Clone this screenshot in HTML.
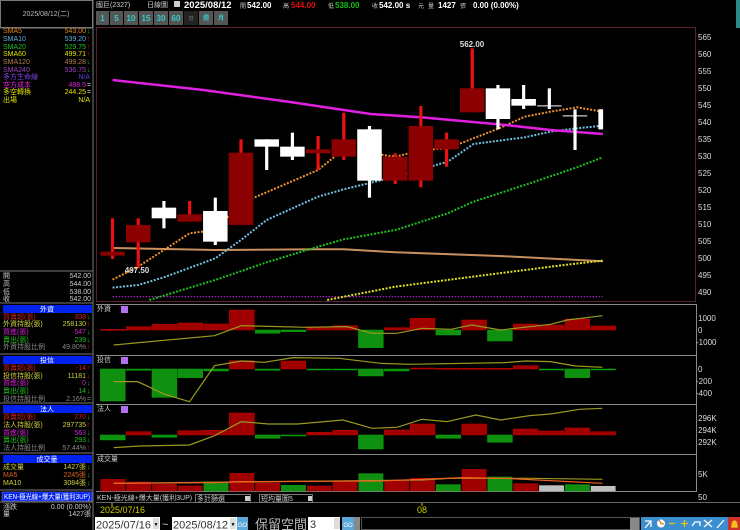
<!DOCTYPE html>
<html><head><meta charset="utf-8">
<style>
html,body{margin:0;padding:0;background:#000;width:740px;height:530px;overflow:hidden}
svg{display:block}
text{font-family:"Liberation Sans","Noto Sans CJK TC",sans-serif}
.s{font-size:7px}
.ax{font-size:8px;fill:#ddd}
</style></head><body>
<svg id="sv" width="740" height="530" viewBox="0 0 740 530" xmlns="http://www.w3.org/2000/svg">
<rect x="0.5" y="0.5" width="92" height="27" fill="#000" stroke="#777"/>
<text x="46" y="16" text-anchor="middle" class="s" fill="#bbb">2025/08/12(二)</text>
<line x1="93" y1="0" x2="93" y2="530" stroke="#777"/>
<line x1="0" y1="28" x2="93" y2="28" stroke="#777"/>
<g class="s">
<text x="3" y="33" fill="#e08020">SMA5</text><text x="86" y="33" text-anchor="end" fill="#e08020">543.00</text><text x="87" y="33" fill="#0c0">↓</text>
<text x="3" y="41" fill="#60b0e0">SMA10</text><text x="86" y="41" text-anchor="end" fill="#60b0e0">539.20</text><text x="87" y="41" fill="#e00">↑</text>
<text x="3" y="49" fill="#20c020">SMA20</text><text x="86" y="49" text-anchor="end" fill="#20c020">529.75</text><text x="87" y="49" fill="#e00">↑</text>
<text x="3" y="56" fill="#e0e000">SMA60</text><text x="86" y="56" text-anchor="end" fill="#e0e000">499.71</text><text x="87" y="56" fill="#e00">↑</text>
<text x="3" y="64" fill="#b08050">SMA120</text><text x="86" y="64" text-anchor="end" fill="#b08050">499.28</text><text x="87" y="64" fill="#0c0">↓</text>
<text x="3" y="72" fill="#a040c0">SMA240</text><text x="86" y="72" text-anchor="end" fill="#a040c0">536.75</text><text x="87" y="72" fill="#0c0">↓</text>
<text x="3" y="79" fill="#8040e0">多方生命線</text><text x="90" y="79" text-anchor="end" fill="#6040e0">N/A</text>
<text x="3" y="87" fill="#e020e0">空方成本</text><text x="86" y="87" text-anchor="end" fill="#e020e0">488.5</text><text x="87" y="87" fill="#ccc">=</text>
<text x="3" y="94" fill="#e0e000">多空轉換</text><text x="86" y="94" text-anchor="end" fill="#e0e000">244.25</text><text x="87" y="94" fill="#ccc">=</text>
<text x="3" y="102" fill="#e0e000">出場</text><text x="90" y="102" text-anchor="end" fill="#e0e000">N/A</text>
</g>
<line x1="0" y1="271" x2="93" y2="271" stroke="#777"/>
<g class="s" fill="#ccc">
<text x="3" y="278">開</text><text x="91" y="278" text-anchor="end">542.00</text>
<text x="3" y="286">高</text><text x="91" y="286" text-anchor="end">544.00</text>
<text x="3" y="294">低</text><text x="91" y="294" text-anchor="end">538.00</text>
<text x="3" y="301">收</text><text x="91" y="301" text-anchor="end">542.00</text>
</g>
<line x1="0" y1="303" x2="93" y2="303" stroke="#777"/>
<rect x="3" y="305" width="89" height="8" fill="#0022ee"/><text x="47" y="311.5" text-anchor="middle" class="s" fill="#fff">外資</text>
<g class="s">
<text x="3" y="319" fill="#d02020">買賣超(張)</text><text x="86" y="319" text-anchor="end" fill="#d02020">308</text><text x="87" y="319" fill="#0c0">↓</text>
<text x="3" y="326" fill="#d0d040">外資持股(張)</text><text x="86" y="326" text-anchor="end" fill="#d0d040">258130</text><text x="87" y="326" fill="#e00">↑</text>
<text x="3" y="334" fill="#d020d0">買進(張)</text><text x="86" y="334" text-anchor="end" fill="#d020d0">547</text><text x="87" y="334" fill="#0c0">↓</text>
<text x="3" y="342" fill="#20c020">賣出(張)</text><text x="86" y="342" text-anchor="end" fill="#20c020">239</text><text x="87" y="342" fill="#0c0">↓</text>
<text x="3" y="349" fill="#888">外資持股比例</text><text x="86" y="349" text-anchor="end" fill="#888">49.80%</text><text x="87" y="349" fill="#e00">↑</text>
</g>
<line x1="0" y1="354" x2="93" y2="354" stroke="#777"/>
<rect x="3" y="356" width="89" height="8" fill="#0022ee"/><text x="47" y="362.5" text-anchor="middle" class="s" fill="#fff">投信</text>
<g class="s">
<text x="3" y="370" fill="#d02020">買賣超(張)</text><text x="86" y="370" text-anchor="end" fill="#d02020">-14</text><text x="87" y="370" fill="#e00">↑</text>
<text x="3" y="378" fill="#d0d040">投信持股(張)</text><text x="86" y="378" text-anchor="end" fill="#d0d040">11181</text><text x="87" y="378" fill="#e00">↓</text>
<text x="3" y="385" fill="#d020d0">買進(張)</text><text x="86" y="385" text-anchor="end" fill="#d020d0">0</text><text x="87" y="385" fill="#0c0">↓</text>
<text x="3" y="393" fill="#20c020">賣出(張)</text><text x="86" y="393" text-anchor="end" fill="#20c020">14</text><text x="87" y="393" fill="#0c0">↓</text>
<text x="3" y="401" fill="#888">投信持股比例</text><text x="86" y="401" text-anchor="end" fill="#888">2.16%</text><text x="87" y="401" fill="#888">=</text>
</g>
<line x1="0" y1="403" x2="93" y2="403" stroke="#777"/>
<rect x="3" y="405" width="89" height="8" fill="#0022ee"/><text x="47" y="411.5" text-anchor="middle" class="s" fill="#fff">法人</text>
<g class="s">
<text x="3" y="419" fill="#d02020">買賣超(張)</text><text x="86" y="419" text-anchor="end" fill="#d02020">270</text><text x="87" y="419" fill="#0c0">↓</text>
<text x="3" y="427" fill="#d0d040">法人持股(張)</text><text x="86" y="427" text-anchor="end" fill="#d0d040">297735</text><text x="87" y="427" fill="#e00">↑</text>
<text x="3" y="435" fill="#d020d0">買進(張)</text><text x="86" y="435" text-anchor="end" fill="#d020d0">563</text><text x="87" y="435" fill="#0c0">↓</text>
<text x="3" y="442" fill="#20c020">賣出(張)</text><text x="86" y="442" text-anchor="end" fill="#20c020">293</text><text x="87" y="442" fill="#0c0">↓</text>
<text x="3" y="450" fill="#888">法人持股比例</text><text x="86" y="450" text-anchor="end" fill="#888">57.44%</text><text x="87" y="450" fill="#e00">↑</text>
</g>
<line x1="0" y1="453" x2="93" y2="453" stroke="#777"/>
<rect x="3" y="455" width="89" height="8" fill="#0022ee"/><text x="47" y="461.5" text-anchor="middle" class="s" fill="#fff">成交量</text>
<g class="s">
<text x="3" y="469" fill="#d0d040">成交量</text><text x="86" y="469" text-anchor="end" fill="#d0d040">1427張</text><text x="87" y="469" fill="#0c0">↓</text>
<text x="3" y="477" fill="#e06020">MA5</text><text x="86" y="477" text-anchor="end" fill="#e06020">2245張</text><text x="87" y="477" fill="#0c0">↓</text>
<text x="3" y="485" fill="#d0d040">MA10</text><text x="86" y="485" text-anchor="end" fill="#d0d040">3084張</text><text x="87" y="485" fill="#0c0">↓</text>
</g>
<line x1="0" y1="490" x2="93" y2="490" stroke="#777"/>
<rect x="2" y="492" width="90" height="9" fill="#0022ee" stroke="#88f" stroke-width="0.5"/>
<text x="4" y="499" class="s" fill="#fff" textLength="86" lengthAdjust="spacingAndGlyphs">KEN-極光線+爆大量(獲利3UP)</text>
<line x1="0" y1="502" x2="93" y2="502" stroke="#777"/>
<g class="s" fill="#ccc">
<text x="3" y="509">漲跌</text><text x="91" y="509" text-anchor="end">0.00 (0.00%)</text>
<text x="3" y="516">量</text><text x="91" y="516" text-anchor="end">1427張</text>
</g>

<g font-size="7" fill="#ccc">
<text x="96" y="7">國巨(2327)</text>
<text x="147" y="7">日線圖</text>
<rect x="174" y="1" width="6" height="6" fill="#ccc"/>
</g>
<text x="184" y="8" font-size="9.5" font-weight="bold" fill="#fff">2025/08/12</text>
<text x="240" y="8" font-size="6" fill="#ccc">開</text>
<text x="247" y="8" font-size="8" font-weight="bold" fill="#fff">542.00</text>
<text x="283" y="8" font-size="6" fill="#ccc">高</text>
<text x="291" y="8" font-size="8" font-weight="bold" fill="#e01010">544.00</text>
<text x="328" y="8" font-size="6" fill="#ccc">低</text>
<text x="335" y="8" font-size="8" font-weight="bold" fill="#10c010">538.00</text>
<text x="372" y="8" font-size="6" fill="#ccc">收</text>
<text x="379" y="8" font-size="8" font-weight="bold" fill="#fff">542.00 s</text>
<text x="418" y="8" font-size="6" fill="#ccc">元</text>
<text x="428" y="8" font-size="6" fill="#ccc">量</text>
<text x="438" y="8" font-size="8" font-weight="bold" fill="#fff">1427</text>
<text x="460" y="8" font-size="6" fill="#ccc">張</text>
<text x="473" y="8" font-size="8" font-weight="bold" fill="#fff">0.00 (0.00%)</text>
<rect x="736" y="0" width="4" height="28" fill="#2a8a8a"/>

<g font-size="8" font-weight="bold" fill="#3cc">
<rect x="96" y="11" width="13" height="14" fill="#555"/><text x="102.5" y="21" text-anchor="middle">1</text>
<rect x="110" y="11" width="13" height="14" fill="#555"/><text x="116.5" y="21" text-anchor="middle">5</text>
<rect x="124" y="11" width="14" height="14" fill="#555"/><text x="131" y="21" text-anchor="middle">10</text>
<rect x="139" y="11" width="14" height="14" fill="#555"/><text x="146" y="21" text-anchor="middle">15</text>
<rect x="154" y="11" width="14" height="14" fill="#555"/><text x="161" y="21" text-anchor="middle">30</text>
<rect x="169" y="11" width="14" height="14" fill="#555"/><text x="176" y="21" text-anchor="middle">60</text>
<rect x="184" y="11" width="14" height="14" fill="#222"/><text x="191" y="20" text-anchor="middle" font-size="5" fill="#666">日</text>
<rect x="199" y="11" width="14" height="14" fill="#555"/><text x="206" y="20" text-anchor="middle" font-size="6">週</text>
<rect x="214" y="11" width="14" height="14" fill="#555"/><text x="221" y="20" text-anchor="middle" font-size="6">月</text>
</g>

<rect x="96.5" y="27.5" width="599" height="274" fill="none" stroke="#5a2030"/>
<g class="ax">
<text x="698" y="40">565</text><text x="698" y="57">560</text><text x="698" y="74">555</text><text x="698" y="91">550</text>
<text x="698" y="108">545</text><text x="698" y="125">540</text><text x="698" y="142">535</text><text x="698" y="159">530</text>
<text x="698" y="176">525</text><text x="698" y="193">520</text><text x="698" y="210">515</text><text x="698" y="227">510</text>
<text x="698" y="244">505</text><text x="698" y="261">500</text><text x="698" y="278">495</text><text x="698" y="295">490</text>
</g>
<g id="main" transform="translate(90,20) scale(0.3953,0.3333)"></g>
<text x="472" y="47" text-anchor="middle" font-size="8" font-weight="bold" fill="#ddd">562.00</text>
<text x="137" y="273" text-anchor="middle" font-size="8" font-weight="bold" fill="#ddd">497.50</text>

<g fill="none" stroke="#888">
<line x1="96" y1="304.5" x2="696" y2="304.5"/>
<line x1="96" y1="355.5" x2="696" y2="355.5"/>
<line x1="96" y1="404.5" x2="696" y2="404.5"/>
<line x1="96" y1="454.5" x2="696" y2="454.5"/>
<line x1="96" y1="491.5" x2="696" y2="491.5"/>
<line x1="696.5" y1="304" x2="696.5" y2="492"/>
</g>
<g id="sub" transform="translate(90,295) scale(0.4149,0.3333)"></g>
<g class="s" fill="#ccc">
<text x="97" y="311">外資</text><text x="97" y="362">投信</text><text x="97" y="411">法人</text><text x="97" y="461">成交量</text>
</g>
<g fill="#b070f0"><rect x="121" y="306" width="7" height="7"/><rect x="121" y="357" width="7" height="7"/><rect x="121" y="406" width="7" height="7"/></g>
<g class="ax">
<text x="698" y="321">1000</text><text x="698" y="333">0</text><text x="696" y="345">-1000</text>
<text x="698" y="372">0</text><text x="696" y="384">-200</text><text x="696" y="396">-400</text>
<text x="698" y="421">296K</text><text x="698" y="433">294K</text><text x="698" y="445">292K</text>
<text x="698" y="477">5K</text><text x="698" y="500">50</text>
</g>

<line x1="96" y1="502.5" x2="740" y2="502.5" stroke="#666"/>
<text x="97" y="500" class="s" fill="#ccc">KEN-極光線+爆大量(獲利3UP)</text>
<rect x="195.5" y="494.5" width="55" height="8" fill="#000" stroke="#777"/><text x="197" y="501" class="s" fill="#ccc">多計篩選</text><rect x="245" y="496" width="5" height="5" fill="#ccc"/>
<rect x="259.5" y="494.5" width="53" height="8" fill="#000" stroke="#777"/><text x="261" y="501" class="s" fill="#ccc">短均量圖5</text><rect x="308" y="496" width="4" height="5" fill="#ccc"/>
<line x1="112" y1="503" x2="112" y2="506" stroke="#cc0"/>
<line x1="422" y1="503" x2="422" y2="506" stroke="#cc0"/>
<text x="100" y="513" font-size="9" fill="#cc0">2025/07/16</text>
<text x="417" y="513" font-size="9" fill="#cc0">08</text>

<rect x="95" y="517" width="65" height="13" fill="#fff"/><text x="96" y="528.5" font-size="11" fill="#333" textLength="55" lengthAdjust="spacingAndGlyphs">2025/07/16</text>
<rect x="153" y="518" width="6" height="11" fill="#ddd"/><text x="156" y="526" font-size="5" text-anchor="middle" fill="#000">▼</text>
<text x="162" y="528" font-size="11" fill="#ccc">~</text>
<rect x="172" y="517" width="65" height="13" fill="#fff"/><text x="173" y="528.5" font-size="11" fill="#333" textLength="55" lengthAdjust="spacingAndGlyphs">2025/08/12</text>
<rect x="230" y="518" width="6" height="11" fill="#ddd"/><text x="233" y="526" font-size="5" text-anchor="middle" fill="#000">▼</text>
<rect x="237" y="517" width="11" height="13" fill="#5aa8d8"/><text x="242.5" y="527" font-size="6" text-anchor="middle" fill="#fff">GO</text>
<text x="255" y="529" font-size="13" fill="#bbb">保留空間</text>
<rect x="308" y="517" width="32" height="13" fill="#fff"/><text x="310" y="528" font-size="11" fill="#333">3</text>
<rect x="334" y="518" width="6" height="11" fill="#ddd"/>
<rect x="342" y="517" width="12" height="13" fill="#5aa8d8"/><text x="348" y="527" font-size="6" text-anchor="middle" fill="#fff">GO</text>
<rect x="354" y="517" width="6" height="13" fill="#888"/>
<rect x="361.5" y="517.5" width="278" height="12" fill="#000" stroke="#555"/>
<rect x="630" y="518" width="9" height="12" fill="#888"/>
<rect x="641" y="517" width="99" height="13" fill="#3b8fcf"/>
<rect x="728" y="517" width="12" height="13" fill="#d0302a"/>
<g fill="none" stroke="#fff" stroke-width="1.3">
<path d="M645 528 L651 521 M645 521 L651 521 L651 527"/>
<circle cx="661" cy="523.5" r="4" fill="#fff" stroke="none"/>
<path d="M659 520 L661 523.5 L664 524" stroke="#e08020"/>
<path d="M669 523.5 h6" stroke="#f0c020"/>
<path d="M681 523.5 h7 M684.5 520 v7" stroke="#f0c020"/>
<path d="M692 526 l3 -4 h5 v4" />
<path d="M704 520 l8 7 M712 520 l-8 7"/>
<path d="M717 528 l7 -8"/>
<path d="M731 527 h7 M732 527 q0 -6 2.5 -6 q2.5 0 2.5 6" fill="#f0c020" stroke="#f0c020"/>
</g>
</svg>
<script>
var NS="http://www.w3.org/2000/svg";
function el(p,t,a){var e=document.createElementNS(NS,t);for(var k in a)e.setAttribute(k,a[k]);p.appendChild(e);return e;}
var m=document.getElementById('main');
function line(g,pts,col,w,dash){el(g,'polyline',{points:pts,fill:'none',stroke:col,'stroke-width':w,'vector-effect':'non-scaling-stroke','stroke-dasharray':dash||'none'});}
line(m,"57,830 1297,830","#a020c0",1.2,"1.5,1.5");
line(m,"57,684 317,690 577,688 642,688 773,697 1035,708 1297,724","#c89060",2);
line(m,"600,840 773,800 1035,760 1200,735 1297,722","#e0e020",2,"2,1.5");
line(m,"150,840 317,780 447,727 577,680 642,658 773,630 905,580 970,545 1100,495 1232,442 1297,412","#20c020",2,"2,1.5");
line(m,"57,803 122,795 187,772 317,715 382,660 447,600 577,530 642,508 773,470 905,425 970,372 1100,352 1165,335 1232,325 1297,317","#70c0e0",2,"2,1.5");
line(m,"57,779 122,740 252,640 317,630 382,550 577,450 642,388 709,400 773,410 840,390 905,385 970,355 1035,325 1100,290 1165,275 1232,262 1297,275","#f09030",2,"2,1.5");
line(m,"57,180 287,210 500,245 710,282 840,292 1035,313 1165,330 1297,342","#e020e0",2.5);
var C=[[695,707,595,717,1],[615,667,595,745,1],[563,595,543,625,0],[583,605,543,605,1],[573,665,533,675,0],
[398,615,358,615,1],[358,380,358,450,0],[380,410,338,420,0],[388,400,348,450,1],[358,410,278,420,1],
[328,482,318,533,0],[410,482,400,492,1],[318,482,258,502,1],[358,388,338,440,1],[205,277,85,277,1],
[205,297,195,328,0],[237,257,195,267,0],[255,259,205,267,0],[285,289,268,390,0],[268,328,268,328,0]];
C.forEach(function(c,i){var cx=57+65*i;var bw=62;var up=c[4];
 if(i==17||i==18){el(m,'rect',{x:cx-31,y:c[0],width:62,height:5,fill:'#999'});}
 el(m,'rect',{x:cx-4,y:c[2],width:8,height:c[3]-c[2],fill:up?'#ee1010':'#fff'});
 if(i==19)bw=12;
 if(!(i==17||i==18))el(m,'rect',{x:cx-bw/2,y:c[0],width:bw,height:Math.max(c[1]-c[0],5),fill:up?'#8b0000':'#fff'});
});
var s=document.getElementById('sub');
function bars(z,arr){arr.forEach(function(v,i){var x=25+62.2*i;var a=Math.min(z,v),b=Math.max(z,v);if(b-a<3){a=z-2;b=z+1;}
 var col=v<z?'#a00000':'#109010';
 el(s,'rect',{x:x,y:a,width:60,height:b-a,fill:col,stroke:v<z?'#c00':'#0a0','stroke-width':0.5,'vector-effect':'non-scaling-stroke'});});}
bars(105,[104,95,88,84,87,45,115,110,95,92,158,98,70,120,75,138,87,90,72,93]);
line(s,"57,150 300,122 365,92 520,97 620,95 680,115 740,115 800,100 870,103 920,90 990,105 1060,95 1110,88 1150,75 1235,62","#9a9a20",1.2);
bars(222,[318,226,307,248,228,197,226,198,225,225,243,228,219,220,220,220,212,225,248,225]);
line(s,"57,260 115,260 180,298 240,320 300,212 365,198 420,202 490,188 600,190 700,205 770,208 1000,203 1050,198 1110,200 1170,213 1235,217","#9a9a20",1.2);
bars(420,[435,410,427,407,406,354,430,423,412,406,462,405,387,430,387,442,402,408,399,410]);
line(s,"57,458 120,453 240,450 300,422 365,380 430,387 500,387 610,375 680,400 740,397 800,373 860,380 930,360 990,375 1060,362 1110,357 1180,343 1235,340","#9a9a20",1.2);
var vt=[552,560,567,572,560,534,563,570,572,560,535,555,549,568,522,545,565,571,568,573];
var vc=['#a00000','#a00000','#a00000','#a00000','#109010','#a00000','#a00000','#109010','#a00000','#a00000','#109010','#a00000','#a00000','#109010','#a00000','#109010','#a00000','#c0c0c0','#109010','#c0c0c0'];
vt.forEach(function(v,i){el(s,'rect',{x:25+62.2*i,y:v,width:60,height:589-v,fill:vc[i]});});
line(s,"57,565 800,555 870,550 1060,550 1235,553","#9a9a20",1.2);
line(s,"57,565 300,563 365,560 700,558 900,548 1000,550 1235,565","#f06020",1.2);
</script>
</body></html>
